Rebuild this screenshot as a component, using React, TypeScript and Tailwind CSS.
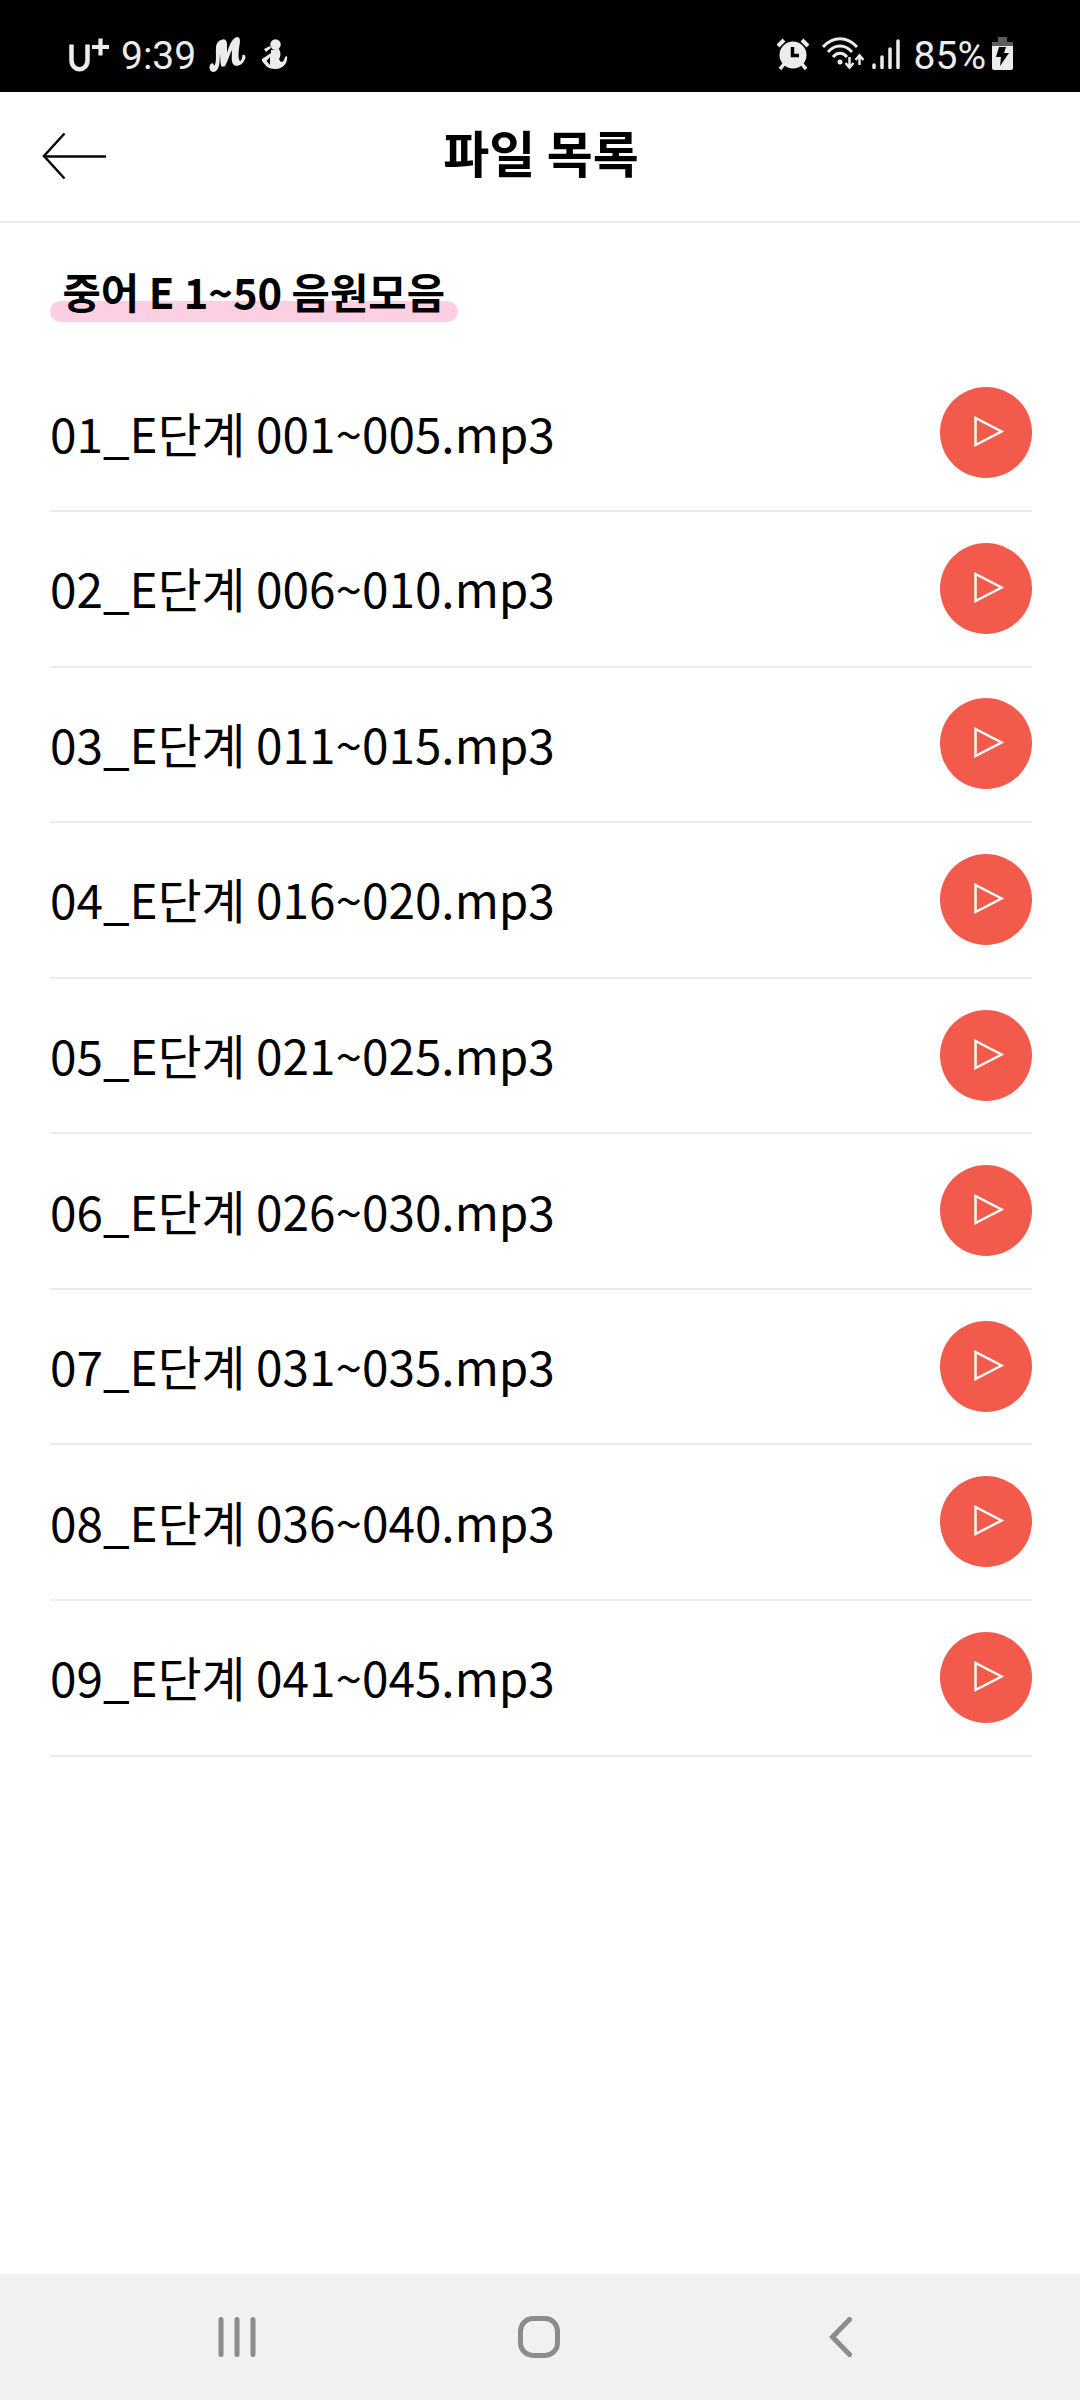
const files = [
  "01_E단계 001~005.mp3",
  "02_E단계 006~010.mp3",
  "03_E단계 011~015.mp3",
  "04_E단계 016~020.mp3",
  "05_E단계 021~025.mp3",
  "06_E단계 026~030.mp3",
  "07_E단계 031~035.mp3",
  "08_E단계 036~040.mp3",
  "09_E단계 041~045.mp3",
];

const StatusBar = () => (
  <div className="flex items-start justify-between h-[92px] bg-black text-[#ececec] font-[Roboto,sans-serif]">
    <div className="flex items-start pl-[67px]">
      <svg className="w-[43px] h-[34px] mt-[38px]" viewBox="0 0 43 34" fill="none" stroke="currentColor">
        <path d="M4.500 6.500V22C4.500 34.300 20.500 34.300 20.500 22V6.500" strokeWidth="4.500" />
        <path d="M25 9H42M33.500 0.500V17.500" strokeWidth="4.200" />
      </svg>
      <span className="ml-[11px] mt-[33px] text-[39px] leading-[46px]">9:39</span>
      <svg className="w-[38px] h-[36px] ml-[13px] mt-[37px]" viewBox="0 0 38 36" fill="currentColor">
        <path d="M12 3C16 1 18 3 18 8L18 16C20 9 23 1 28 0C31 0 31.500 3 30.500 8C29.500 15 29 21 30.500 23.500C32 25 33 22 33.500 18C36.500 17 37 20 36 22C34 28 27 31 24 27C22 24 23 17 23 13C20 19 18 26 16 29C13 31 11.500 29 11.500 25L11 17C10.500 24 11 31 7 34C3 37-1 33 1 28C3 25 5 26 5 29C8 26 6.500 17 7 11C7 7 9 4 12 3Z" />
      </svg>
      <svg className="w-[27px] h-[31px] ml-[14px] mt-[39px]" viewBox="0 0 27 31" fill="currentColor">
        <circle cx="14.500" cy="5.500" r="5.200" />
        <path fillRule="evenodd" d="M10 11L18 10C20 14 20 17 18 20C20 25 23 23 24 18L26 17C27 23 23 30 14 30C7 30 5 27 1 22V20L10 14ZM9 18L5.500 22L9 26Z" />
        <path d="M3 10L9 7L10 9L5 13Z" />
      </svg>
    </div>
    <div className="flex items-start pr-[67px]">
      <svg className="w-[34px] h-[32px] mt-[38px]" viewBox="0 0 34 32" fill="none" stroke="currentColor">
        <circle cx="17" cy="17" r="13.500" fill="currentColor" stroke="none" />
        <path d="M2 8L8 2M26 2L32 8" strokeWidth="4" />
        <path d="M8 26L4 31M26 26L30 31" strokeWidth="3.500" />
        <path d="M16.500 9V17.500H23" stroke="#000" strokeWidth="3.500" />
      </svg>
      <svg className="w-[42px] h-[33px] ml-[12px] mt-[37px]" viewBox="0 0 42 33" fill="none" stroke="currentColor" strokeWidth="3">
        <path d="M1 10C11-1 25-1 35 10M6 15C13 7 23 7 30 15M11 20C15 15 21 15 25 20" />
        <circle cx="18" cy="25" r="2.500" fill="currentColor" stroke="none" />
        <path d="M27.500 20V30M23.500 26L27.500 30.500L31.500 26M37.500 28V19M33.500 23L37.500 18.500L41.500 23" strokeWidth="2.500" />
      </svg>
      <svg className="w-[28px] h-[31px] ml-[8px] mt-[39px]" viewBox="0 0 28 31" stroke="currentColor" strokeWidth="3.500" strokeLinecap="round">
        <path d="M2 26V28.500M10 18V28.500M18 10V28.500M26 2V28.500" />
      </svg>
      <span className="ml-[14px] mt-[33px] text-[39px] leading-[46px]">85%</span>
      <svg className="w-[21px] h-[33px] ml-[6px] mt-[37px]" viewBox="0 0 21 33">
        <path d="M6 0H15V5H21V9H0V5H6Z" fill="#5c5c5c" />
        <path d="M0 9H21V31Q21 33 19 33H2Q0 33 0 31Z" fill="#ececec" />
        <path d="M7 10H14L12 16H17L8 29L9 20H4Z" fill="#000" />
      </svg>
    </div>
  </div>
);

const Header = () => (
  <header className="grid grid-cols-[1fr_auto_1fr] items-center h-[131px] pb-[2px] border-b-2 border-[#ebebeb]">
    <svg className="w-[64px] h-[48px] ml-[42px]" viewBox="0 0 64 48" fill="none" stroke="#0a0505" strokeWidth="2.500">
      <path d="M22.500 1.500L2 24L22.500 46.500M2 24.500H64" />
    </svg>
    <h1 className="mb-[9px] pl-[2px] text-[50px] leading-[60px] font-bold">파일 목록</h1>
  </header>
);

const FileRow = ({ name }: { name: string }) => (
  <li className="flex items-center justify-between h-[155.570px] border-b-2 border-[#ebebeb]">
    <span className="pb-px text-[47.700px] leading-[60px]">{name}</span>
    <button className="w-[92px] h-[91px] mb-px rounded-[50%] bg-[#f25b4c]">
      <svg className="w-[92px] h-[91px]" viewBox="0 0 92 91" fill="none" stroke="#fff" strokeWidth="2.500">
        <path d="M35.500 31V58L61.500 44.500Z" />
      </svg>
    </button>
  </li>
);

const NavBar = () => (
  <nav className="flex items-center h-[126px] bg-[#f1f1f1]">
    <svg className="w-[38px] h-[40px] ml-[218px]" viewBox="0 0 38 40" stroke="#8c8c8c" strokeWidth="5" strokeLinecap="round">
      <path d="M3 2.500V37.500M19 2.500V37.500M35 2.500V37.500" />
    </svg>
    <div className="size-[42px] ml-[262px] rounded-[15px] border-5 border-[#8c8c8c]"></div>
    <svg className="w-[24px] h-[40px] ml-[269px]" viewBox="0 0 24 40" fill="none" stroke="#8c8c8c" strokeWidth="5" strokeLinecap="round">
      <path d="M20.500 2.500L3.500 20L20.500 37.500" />
    </svg>
  </nav>
);

export default function App() {
  return (
    <div className="flex flex-col w-[1080px] h-[2400px] bg-white text-black font-['Noto_Sans_CJK_KR',sans-serif]">
      <StatusBar />
      <Header />
      <main className="flex-1 pl-[50px] pr-[48px]">
        <div className="flex h-[133.500px] pt-[38px]">
          <h2 className="px-[12.500px] text-[41.700px] leading-[60px] font-bold">
            <span className="relative z-10">중어 E 1~50 음원모음</span>
            <div className="h-[21px] -mx-[12.500px] -mt-[20px] rounded-full bg-[#fdcfe3]"></div>
          </h2>
        </div>
        <ul>
          {files.map((name) => (
            <FileRow key={name} name={name} />
          ))}
        </ul>
      </main>
      <NavBar />
    </div>
  );
}
